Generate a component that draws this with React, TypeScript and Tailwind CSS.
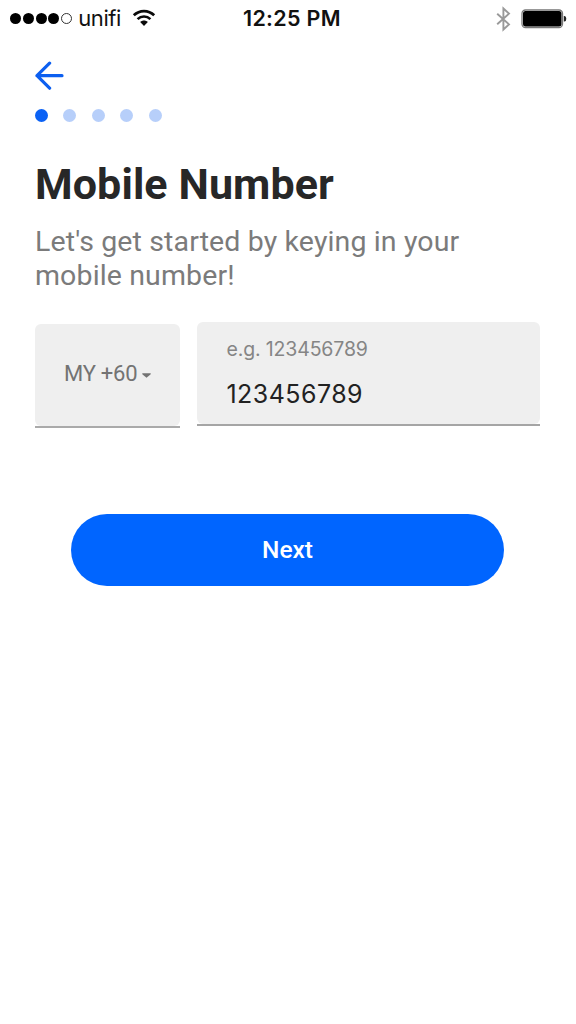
function Wifi() {
  return (
    <svg className="ml-[11px] h-[18px] w-[24px]" viewBox="0 0 24 18" fill="none" stroke="#0a0a0a">
      <path d="M1.8 6.3C7.6 .7 16.4 .7 22.2 6.3" strokeWidth="2.7" />
      <path d="M5.6 10.2C9.2 6.6 14.8 6.6 18.4 10.2" strokeWidth="2.6" />
      <path d="M8.2 13C10.4 11 13.6 11 15.8 13L12 16.9Z" fill="#0a0a0a" stroke="none" />
    </svg>
  );
}

function StatusBar() {
  return (
    <header className="grid h-[36px] grid-cols-[243px_1fr_auto] items-center font-['Inter',sans-serif] text-[#111]">
      <div className="flex h-full items-center pl-[10px]">
        <div className="flex gap-[1.8px]">
          {[0, 1, 2, 3].map((i) => (
            <span key={i} className="size-[11px] rounded-full bg-black" />
          ))}
          <span className="size-[11px] rounded-full border border-[#333]" />
        </div>
        <span className="ml-[6px] text-[22px] leading-[36px] tracking-[-0.4px]">unifi</span>
        <Wifi />
      </div>
      <div className="text-[21.5px] leading-[36px] font-semibold tracking-[0.3px] whitespace-nowrap">12:25 PM</div>
      <div className="flex items-center pt-[1px] pr-[9px]">
        <svg className="h-[26px] w-[16px]" viewBox="0 0 16 26" fill="none" stroke="#999" strokeWidth="1.9">
          <path d="M2.2 7.7L14 18.4L8.4 23.5V2.5L14 7.6L2.2 18.3" />
        </svg>
        <svg className="ml-[10px] h-[20px] w-[46px]" viewBox="0 0 46 20">
          <rect x="1" y="1" width="40.5" height="17.5" rx="3.5" fill="#fff" stroke="#777" strokeWidth="1.3" />
          <rect x="2" y="2" width="38.5" height="15.5" rx="2.5" fill="#000" />
          <path d="M42.8 7H43.5Q45.3 7 45.3 9.8T43.5 12.6H42.8Z" fill="#222" />
        </svg>
      </div>
    </header>
  );
}

export default function App() {
  return (
    <div className="flex h-[1024px] w-[576px] flex-col overflow-hidden bg-white font-['Roboto',sans-serif]">
      <StatusBar />
      <main className="flex flex-col pr-[36px] pl-[35px]">
        <button className="mt-[25px] h-[30px] w-[30px]" aria-label="Back">
          <svg className="h-[30px] w-[30px]" viewBox="0 0 30 30" fill="none" stroke="#0c5ff0" strokeWidth="3.2" strokeLinecap="round" strokeLinejoin="round">
            <path d="M14.6 2.2L2 14.7L14.6 27.2M2 14.7H27" />
          </svg>
        </button>
        <div className="mt-[18px] flex gap-[15.4px]">
          <span className="size-[13px] rounded-full bg-[#0b62f5]" />
          {[1, 2, 3, 4].map((i) => (
            <span key={i} className="size-[13px] rounded-full bg-[#b7cffa]" />
          ))}
        </div>
        <h1 className="mt-[37px] text-[43px] leading-[50px] font-bold tracking-[0.1px] whitespace-nowrap text-[#272727]">
          Mobile Number
        </h1>
        <p className="mt-[16px] text-[28.5px] leading-[33.5px] tracking-[0.13px] whitespace-nowrap text-[#7b7b7b]">
          Let's get started by keying in your
          <br />
          mobile number!
        </p>
        <div className="mt-[30px] flex gap-[17.5px]">
          <button className="mt-[2px] flex h-[104px] w-[144.5px] flex-col">
            <span className="flex w-full flex-1 items-center rounded-[6px] bg-[#efefef] pb-[4px] pl-[29px] text-[22px] tracking-[-0.25px] whitespace-nowrap text-[#737373]">
              MY +60
              <svg className="mt-[4px] ml-[5px] h-[5px] w-[9px]" viewBox="0 0 9 5" fill="#737373">
                <path d="M.3 .3H8.7V1.2L4.5 4.8L.3 1.2Z" />
              </svg>
            </span>
            <span className="h-[2px] w-full bg-[#aaa]" />
          </button>
          <div className="flex h-[104px] flex-1 flex-col font-['Inter',sans-serif]">
            <div className="flex w-full flex-1 flex-col rounded-[6px] bg-[#efefef] pl-[29.5px]">
              <span className="mt-[15px] text-[19.5px] leading-[24px] tracking-[-0.15px] text-[#858585]">e.g. 123456789</span>
              <span className="mt-[17px] text-[25px] leading-[32px] tracking-[0.45px] text-[#222]">123456789</span>
            </div>
            <span className="h-[2px] w-full bg-[#a5a5a5]" />
          </div>
        </div>
        <button className="mt-[86px] ml-[36px] h-[72px] w-[433px] rounded-full bg-[#0065ff] text-[24.5px] font-medium text-white">
          Next
        </button>
      </main>
    </div>
  );
}
